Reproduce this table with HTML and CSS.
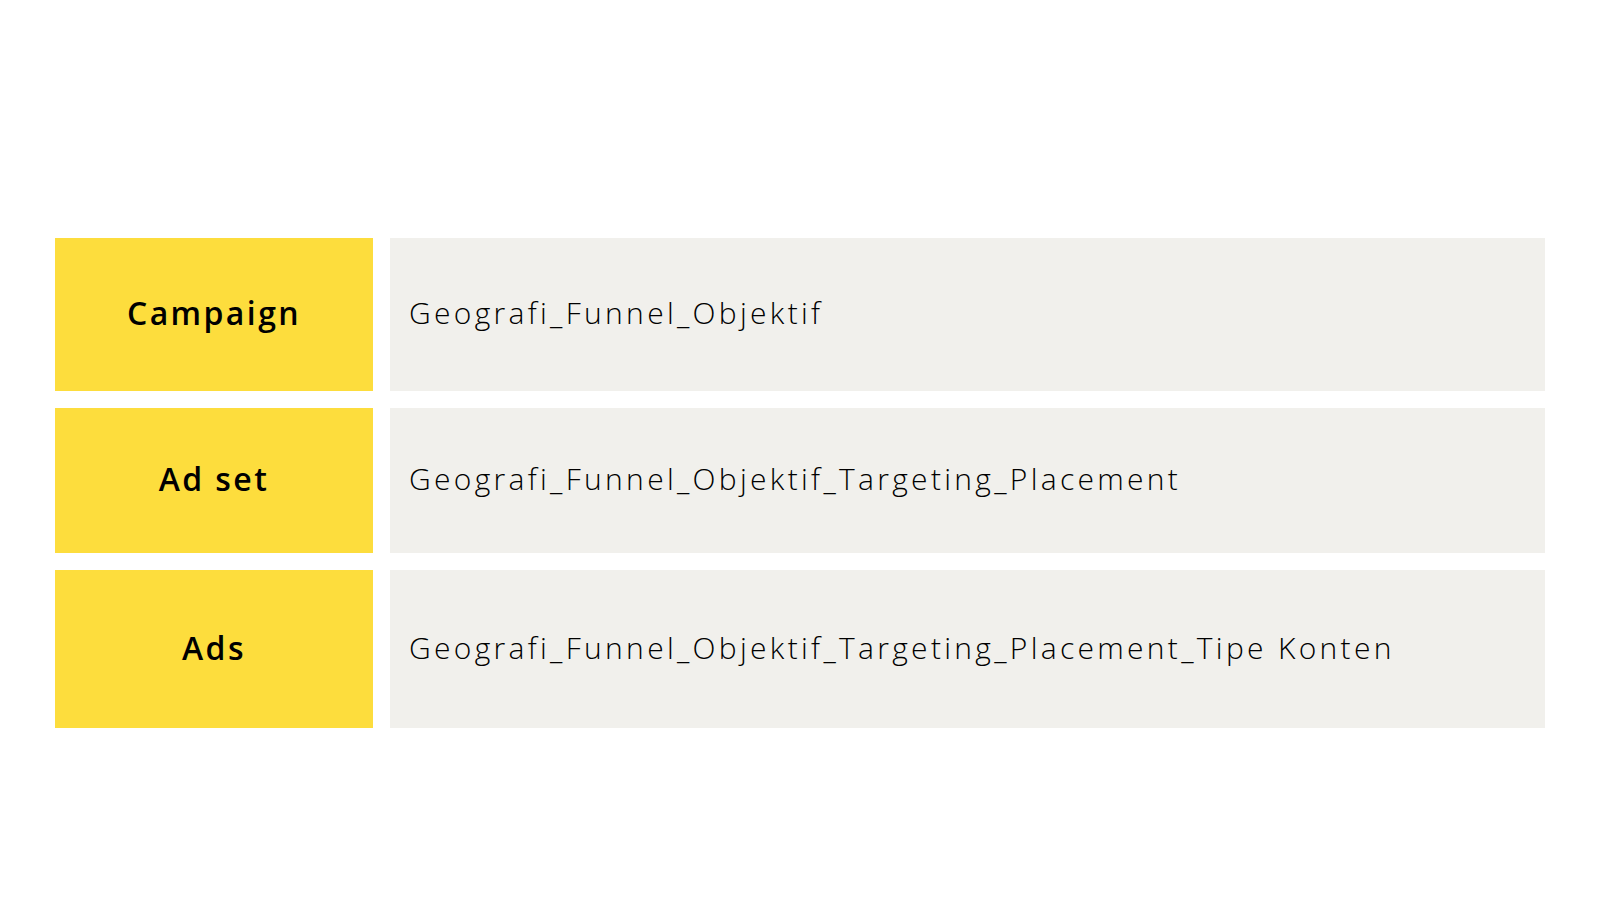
FILE: index.html
```html
<!DOCTYPE html>
<html>
<head>
<meta charset="utf-8">
<link rel="stylesheet" href="styles.css">
</head>
<body>
<main class="table">
  <div class="label row1">Campaign</div>
  <div class="value row1">Geografi_Funnel_Objektif</div>
  <div class="label row2">Ad set</div>
  <div class="value row2">Geografi_Funnel_Objektif_Targeting_Placement</div>
  <div class="label row3">Ads</div>
  <div class="value row3">Geografi_Funnel_Objektif_Targeting_Placement_Tipe Konten</div>
</main>
</body>
</html>
```
FILE: styles.css
```css
html, body {
  margin: 0;
  padding: 0;
  background: #ffffff;
  width: 1600px;
  height: 900px;
  overflow: hidden;
}
.table {
  display: grid;
  grid-template-columns: 318px 1155px;
  grid-template-rows: 153px 145px 158px;
  column-gap: 17px;
  row-gap: 17px;
  padding: 238px 0 0 55px;
}
.label {
  background: #fddd3d;
  display: flex;
  align-items: center;
  justify-content: center;
  padding-bottom: 4px;
  font-family: "Open Sans", "Liberation Sans", sans-serif;
  font-weight: 600;
  font-size: 32px;
  letter-spacing: 2.4px;
  color: #000;
}
.value {
  background: #f1f0ec;
  display: flex;
  align-items: center;
  padding-left: 19px;
  padding-bottom: 4px;
  font-family: "Open Sans", "Liberation Sans", sans-serif;
  font-weight: 300;
  font-size: 30px;
  letter-spacing: 3.3px;
  color: #000;
}
```
